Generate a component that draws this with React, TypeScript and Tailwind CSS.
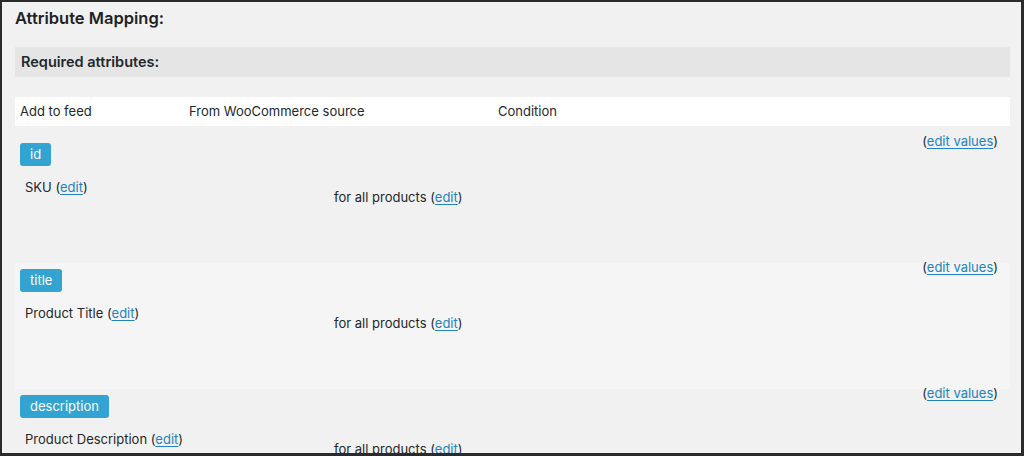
import React from "react";

const rows = [
  { tag: "id", source: "SKU", bg: "bg-[#f1f1f1]" },
  { tag: "title", source: "Product Title", bg: "bg-[#f5f5f5]" },
  { tag: "description", source: "Product Description", bg: "bg-[#f1f1f1]" },
];

function Edit({ label = "edit" }: { label?: string }) {
  return (
    <>
      (<a className="text-[#2383bd] underline underline-offset-2 decoration-1">{label}</a>)
    </>
  );
}

export default function App() {
  return (
    <div
      className="w-[1024px] h-[456px] overflow-hidden bg-[#f1f1f1] border-l-2 border-t-2 border-r-[3px] border-b-[3px] border-[#2b2b2b] text-[#23282d] text-[13px]"
      style={{ fontFamily: "Inter, 'Noto Sans', sans-serif" }}
    >
      <div className="ml-[13px] w-[995px] flex flex-col">
        <h2 className="text-[16.5px] font-semibold leading-[22px] mt-[5px] text-[#1d2327]">
          Attribute Mapping:
        </h2>
        <div className="mt-[18px] h-[30px] bg-[#e4e5e4] flex items-center pl-[6px]">
          <span className="text-[14.5px] font-semibold text-[#23282d]">Required attributes:</span>
        </div>
        <div className="mt-[20px] h-[29px] bg-white flex items-center">
          <span className="ml-[5px] w-[169px]">Add to feed</span>
          <span className="w-[309px]">From WooCommerce source</span>
          <span>Condition</span>
        </div>
        <div className="h-[11px]" />
        {rows.map((r) => (
          <div key={r.tag} className={`h-[126px] shrink-0 ${r.bg} flex flex-col pl-[5px]`}>
            <div className="h-[6px] flex justify-end pr-[12px]">
              <div className="-mt-[3.5px] leading-[15px] h-[15px]">
                <Edit label="edit values" />
              </div>
            </div>
            <div className="flex">
              <span className="h-[23px] px-[10px] rounded-[3px] bg-[#33a3d1] text-white flex items-center leading-none">
                {r.tag}
              </span>
            </div>
            <div className="flex">
              <div className="w-[314px] pl-[5px] pt-[14px] leading-[15px]">
                {r.source} <Edit />
              </div>
              <div className="pt-[24px] leading-[15px]">
                for all products <Edit />
              </div>
            </div>
          </div>
        ))}
      </div>
    </div>
  );
}
